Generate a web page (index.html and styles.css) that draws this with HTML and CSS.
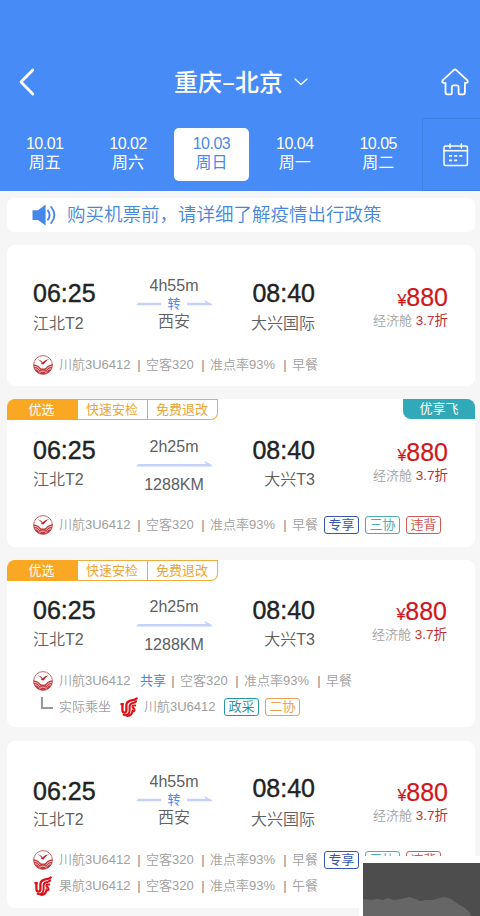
FILE: index.html
```html
<!DOCTYPE html>
<html lang="zh-CN">
<head>
<meta charset="utf-8">
<title>重庆–北京</title>
<link rel="stylesheet" href="styles.css">
</head>
<body>
<svg class="defs" width="0" height="0">
  <symbol id="sichuan" viewBox="0 0 20 20">
    <circle cx="10" cy="10" r="9.4" fill="#fff" stroke="#c0575c" stroke-width=".9"/>
    <path d="M4.2 4.2C6.5 4.6 8.4 5.6 9.8 7.5 11.2 5.7 13 4.6 16 4.2 13.5 5.6 12 7.2 10.6 9.5 9.6 9.4 9 9.1 8 8.5L8.6 7.8C7.6 6.2 6.3 5.2 4.2 4.2Z" fill="#b5232c"/>
    <path d="M.8 9.2C3.2 10 5.2 10.2 6.8 12.2 7.8 13.4 9 13.6 10 13.6 11 13.6 12.2 13.4 13.2 12.2 14.8 10.2 16.8 10 19.2 9.2 20 13.4 17 19.2 10 19.3 3 19.2 0 13.4 .8 9.2Z" fill="#c2393f"/>
    <path d="M1.2 11.4C4 11.6 5.6 12.6 7.2 15.2M2 13.8C4 13.8 5 14.6 6.2 16.6M18.8 11.4C16 11.6 14.4 12.6 12.8 15.2M18 13.8C16 13.8 15 14.6 13.8 16.6M6.4 17.8Q10 14.2 13.6 17.8" fill="none" stroke="#fff" stroke-width=".7"/>
  </symbol>
  <symbol id="airchina" viewBox="0 0 18 20">
    <g fill="none" stroke="#dc1218" stroke-linecap="round">
      <path stroke-width="2.3" d="M2.4 7.6V13C2.4 16.4 6.4 16.6 6.4 13.2V8C6.4 4.2 9.8 3.6 12.8 3.1 14.6 2.8 15.8 2.3 16.6 1.4"/>
      <path stroke-width="2" d="M1.2 7H3M3.6 17.8C7 19 9.6 17 9.6 13.6V9.2C9.6 6.6 11.6 6.3 13.6 5.9 14.8 5.6 15.6 5.2 16.1 4.4"/>
      <path stroke-width="2" d="M15.2 8.5C13.4 8.3 12.2 8.6 12.4 9.9 12.8 11.2 14.8 11.4 14.6 13.2 14.4 14.6 12.8 14.6 12.5 13.6M7.2 18.9C10.6 18.6 12.4 17 12.5 13.6"/>
    </g>
  </symbol>
  <symbol id="arrow" viewBox="0 0 76 8">
    <path d="M0 6.4 2.5 4H70L68 .8 76 5V6.4Z" fill="#c5d1fb"/>
  </symbol>
  <symbol id="arrow-split" viewBox="0 0 76 8">
    <path d="M0 5.2 2.5 2.8H25V5.2ZM51 2.8H70L68 0 76 4V5.2H51Z" fill="#c5d1fb"/>
  </symbol>
</svg>

<header class="header">
  <div class="titlebar">
    <svg class="back" viewBox="0 0 16 28"><path d="M13.8 2 2 14 13.8 26" fill="none" stroke="#fff" stroke-width="2.8" stroke-linecap="round" stroke-linejoin="round"/></svg>
    <h1 class="title">重庆–北京</h1>
    <svg class="chevron" viewBox="0 0 14 8"><path d="M1 1 7 6.5 13 1" fill="none" stroke="#fff" stroke-width="1.3" stroke-linecap="round"/></svg>
    <svg class="home" viewBox="0 0 28 28"><path d="M13 1.8Q14 1 15 1.8L26.2 12.2Q27.6 15 25 14.9H23.9V24.6Q23.9 26.3 22.2 26.3H18.6Q17.6 26.3 17.6 25.3V19.5Q17.6 17.3 15.6 17.3H12.8Q10.8 17.3 10.8 19.5V25.3Q10.8 26.3 9.8 26.3H6.2Q4.5 26.3 4.5 24.6V14.9H3Q.4 15 1.8 12.2Z" fill="none" stroke="#fff" stroke-width="1.8" stroke-linejoin="round"/></svg>
  </div>
  <nav class="dates">
    <div class="date"><span>10.01</span><span>周五</span></div>
    <div class="date"><span>10.02</span><span>周六</span></div>
    <div class="date active"><span>10.03</span><span>周日</span></div>
    <div class="date"><span>10.04</span><span>周一</span></div>
    <div class="date"><span>10.05</span><span>周二</span></div>
    <div class="calendar">
      <svg viewBox="0 0 26 24"><g fill="none" stroke="#fff" stroke-width="1.5" stroke-linecap="round"><rect x="1" y="3" width="23.4" height="19.6" rx="1.5"/><path d="M1 7.7H24.4M7 1V5M18.4 1V5"/><path stroke-linecap="butt" stroke-width="1.7" d="M11.2 12.8H14.2M16.3 12.8H19.3M6.1 12.8H9.1M6.1 17.4H9.1M11.2 17.4H14.2"/></g></svg>
    </div>
  </nav>
</header>

<div class="notice">
  <svg viewBox="0 0 26 22"><path d="M.5 6.2H6L13.6.5V21.5L6 16H.5Z" fill="#4687ea"/><path d="M16 6.6Q19.2 11 16 15.6M19.2 3Q25.6 11 19.2 19" fill="none" stroke="#4687ea" stroke-width="1.9" stroke-linecap="round"/></svg>
  <span>购买机票前，请详细了解疫情出行政策</span>
</div>

<main>
  <section class="card one">
    <div class="trip">
      <div class="end depart"><b class="time">06:25</b><span class="place">江北T2</span></div>
      <div class="via"><span>4h55m</span><div class="transfer"><svg><use href="#arrow-split"/></svg><em>转</em></div><span class="stop">西安</span></div>
      <div class="end arrive"><b class="time">08:40</b><span class="place">大兴国际</span></div>
      <div class="fare"><div class="price"><i>¥</i>880</div><div class="cabin">经济舱 <span>3.7折</span></div></div>
    </div>
    <div class="info"><svg class="logo"><use href="#sichuan"/></svg><span class="flight">川航3U6412</span><i class="bar">|</i><span class="plane">空客320</span><i class="bar">|</i><span class="rate">准点率93%</span><i class="bar">|</i><span>早餐</span></div>
  </section>

  <section class="card two">
    <div class="ribbon"><span class="pick">优选</span><span>快速安检</span><span>免费退改</span><strong>优享飞</strong></div>
    <div class="trip">
      <div class="end depart"><b class="time">06:25</b><span class="place">江北T2</span></div>
      <div class="via"><span>2h25m</span><svg><use href="#arrow"/></svg><span>1288KM</span></div>
      <div class="end arrive"><b class="time">08:40</b><span class="place">大兴T3</span></div>
      <div class="fare"><div class="price"><i>¥</i>880</div><div class="cabin">经济舱 <span>3.7折</span></div></div>
    </div>
    <div class="info"><svg class="logo"><use href="#sichuan"/></svg><span class="flight">川航3U6412</span><i class="bar">|</i><span class="plane">空客320</span><i class="bar">|</i><span class="rate">准点率93%</span><i class="bar">|</i><span>早餐</span><span class="tag blue">专享</span><span class="tag teal">三协</span><span class="tag red">违背</span></div>
  </section>

  <section class="card three">
    <div class="ribbon"><span class="pick">优选</span><span>快速安检</span><span>免费退改</span></div>
    <div class="trip">
      <div class="end depart"><b class="time">06:25</b><span class="place">江北T2</span></div>
      <div class="via"><span>2h25m</span><svg><use href="#arrow"/></svg><span>1288KM</span></div>
      <div class="end arrive"><b class="time">08:40</b><span class="place">大兴T3</span></div>
      <div class="fare"><div class="price"><i>¥</i>880</div><div class="cabin">经济舱 <span>3.7折</span></div></div>
    </div>
    <div class="info"><svg class="logo"><use href="#sichuan"/></svg><span class="flight">川航3U6412</span><span class="share">共享</span><i class="bar">|</i><span class="plane">空客320</span><i class="bar">|</i><span class="rate">准点率93%</span><i class="bar">|</i><span>早餐</span></div>
    <div class="info operated"><i class="branch"></i><span class="actual">实际乘坐</span><svg class="logo ca"><use href="#airchina"/></svg><span class="flight">川航3U6412</span><span class="tag sea">政采</span><span class="tag orange">二协</span></div>
  </section>

  <section class="card four">
    <div class="trip">
      <div class="end depart"><b class="time">06:25</b><span class="place">江北T2</span></div>
      <div class="via"><span>4h55m</span><div class="transfer"><svg><use href="#arrow-split"/></svg><em>转</em></div><span class="stop">西安</span></div>
      <div class="end arrive"><b class="time">08:40</b><span class="place">大兴国际</span></div>
      <div class="fare"><div class="price"><i>¥</i>880</div><div class="cabin">经济舱 <span>3.7折</span></div></div>
    </div>
    <div class="info"><svg class="logo"><use href="#sichuan"/></svg><span class="flight">川航3U6412</span><i class="bar">|</i><span class="plane">空客320</span><i class="bar">|</i><span class="rate">准点率93%</span><i class="bar">|</i><span>早餐</span><span class="tag blue">专享</span><span class="tag teal">三协</span><span class="tag red">违背</span></div>
    <div class="info second"><svg class="logo ca"><use href="#airchina"/></svg><span class="flight">果航3U6412</span><i class="bar">|</i><span class="plane">空客320</span><i class="bar">|</i><span class="rate">准点率93%</span><i class="bar">|</i><span>午餐</span></div>
  </section>
</main>

<div class="float">
  <svg viewBox="0 0 117 53"><rect width="117" height="53" fill="#4d4d4d"/><path d="M0 36 8 37 15 36 20 37 25 35 31 37 38 36 46 34 52 36 57 38 63 37 70 37 76 35 82 34 88 36 95 41 102 45 107 50 108 53H0Z" fill="#666"/></svg>
</div>
</body>
</html>
```
FILE: styles.css
```css
* { box-sizing: border-box; }
body {
  margin: 0;
  width: 480px;
  height: 916px;
  overflow: hidden;
  position: relative;
  background: #f6f6f6;
  font-family: "Liberation Sans", "Noto Sans CJK SC", sans-serif;
  color: #606060;
}
i, em { font-style: normal; }
svg { display: block; flex: none; }
.defs { position: absolute; }

.header {
  height: 192px;
  background: #478bf6;
  border-bottom: 1px solid #fff;
  color: #fff;
  padding-top: 50px;
}
.titlebar {
  height: 68px;
  display: flex;
  align-items: center;
  padding: 0 11px 4px 19px;
}
.back { width: 16px; height: 28px; }
.title {
  margin: 0 0 0 139px;
  width: 110px;
  padding-bottom: 2px;
  font-family: "Noto Sans CJK SC", sans-serif;
  font-size: 24px;
  font-weight: 500;
  line-height: 32px;
  white-space: nowrap;
}
.chevron { width: 14px; height: 8px; margin-left: 10px; }
.home { width: 28px; height: 28px; margin-left: auto; }

.dates { display: flex; height: 73px; padding-left: 3px; }
.date {
  width: 75px;
  height: 53px;
  margin: 10px 4.2px 0;
  padding-top: 7px;
  border-radius: 5px;
  display: flex;
  flex-direction: column;
  align-items: center;
  font-size: 16px;
  line-height: 18px;
}
.date span:first-child { letter-spacing: -.5px; }
.date span:last-child { line-height: 19px; }
.date.active { background: #fff; color: #478be9; }
.calendar {
  margin-left: auto;
  width: 58px;
  border: 1px solid #3f80e4;
  border-right: 0;
  display: flex;
  align-items: center;
  padding-left: 20px;
}
.calendar svg { width: 26px; height: 24px; }

.notice {
  margin: 6px 5px 0 7px;
  height: 34px;
  border-radius: 7px;
  background: #fff;
  display: flex;
  align-items: center;
  padding-left: 25px;
  font-size: 18.5px;
  line-height: 28px;
  color: #4687dc;
  font-weight: 350;
}
.notice svg { width: 26px; height: 22px; margin-right: 9px; }

.card {
  width: 468px;
  margin-left: 7px;
  background: #fff;
  border-radius: 8px;
}
.one { height: 141px; margin-top: 13px; }
.two { height: 148px; margin-top: 13px; }
.three { height: 167px; margin-top: 13px; }
.four { height: 167px; margin-top: 14px; }

.ribbon { display: flex; height: 21px; font-size: 13px; line-height: 19px; }
.ribbon span {
  width: 70px;
  border: 1px solid #f0ad3b;
  border-left: 0;
  color: #eda535;
  text-align: center;
  padding-right: 1px;
}
.ribbon .pick {
  width: 71px;
  background: #faa823;
  border-color: #faa823;
  border-top-left-radius: 8px;
  color: #fff;
}
.ribbon span:nth-child(3) { border-bottom-right-radius: 7px; }
.ribbon strong {
  margin-left: auto;
  width: 72px;
  height: 20px;
  border-radius: 0 8px 0 8px;
  background: #32a9b8;
  color: #fff;
  font-weight: 400;
  line-height: 20px;
  text-align: center;
}

.trip {
  display: grid;
  grid-template-columns: 103px 76px 103px 133px;
  padding-left: 26px;
  align-items: start;
}
.one .trip { height: 110px; }
.two .trip { height: 95px; }
.three .trip { height: 90px; }
.four .trip { height: 109px; }
.end { display: flex; flex-direction: column; }
.arrive { align-items: flex-end; }
.one .end { padding-top: 33px; }
.two .end { padding-top: 15px; }
.three .end { padding-top: 14px; }
.four .depart { padding-top: 35px; }
.four .arrive { padding-top: 32px; }
.time {
  font-size: 25px;
  font-weight: 400;
  line-height: 30px;
  color: #222;
  -webkit-text-stroke: .4px #222;
}
.place { margin-top: 6px; font-size: 16px; line-height: 20px; font-weight: 350; }
.two .place, .three .place { margin-top: 5px; }
.four .depart .place { margin-top: 4px; }
.four .arrive .place { margin-top: 7px; }
.via {
  display: flex;
  flex-direction: column;
  align-items: center;
  font-size: 16px;
  line-height: 20px;
}
.via svg { width: 76px; height: 8px; }
.via > svg { margin: 3px 0 7px; }
.stop { font-weight: 350; padding-top: 1px; }
.one .via { padding-top: 31px; }
.two .via { padding-top: 17px; }
.three .via { padding-top: 16px; }
.four .via { padding-top: 31px; }
.transfer { display: grid; height: 15px; align-items: center; justify-items: center; }
.transfer > * { grid-area: 1 / 1; }
.transfer em { font-size: 13px; line-height: 15px; color: #478be9; }
.fare { text-align: right; }
.one .fare { padding-top: 37px; }
.two .fare { padding-top: 17px; }
.three .fare { padding-top: 15px; padding-right: 1px; }
.four .fare { padding-top: 36px; }
.price { height: 31px; font-size: 25px; line-height: 30px; color: #d0171b; -webkit-text-stroke: .2px #d0171b; }
.price i { font-size: 16px; }
.cabin { font-size: 13px; line-height: 16px; color: #a2a2a2; font-weight: 350; }
.cabin span { color: #bd2f31; font-size: 13.5px; font-weight: 400; }

.info {
  display: flex;
  align-items: center;
  height: 20px;
  padding-left: 26px;
  font-size: 13px;
  line-height: 20px;
  font-weight: 350;
  color: #a0a0a0;
  white-space: nowrap;
}
.logo { width: 20px; height: 20px; margin-right: 6px; }
.ca { width: 18px; margin: 0 7px 0 1px; }
.flight { width: 73px; }
.plane { width: 50px; }
.rate { width: 68px; }
.bar { width: 14px; text-align: center; font-weight: 400; color: #888; }
.share { width: 34px; padding-left: 8px; color: #4687dc; font-weight: 400; }
.operated, .second { margin-top: 6px; }
.branch {
  width: 12px;
  height: 12px;
  margin: -8px 6px 0 8px;
  border: solid #999;
  border-width: 0 0 2px 2px;
}
.actual { width: 60px; }
.operated .ca { margin-right: 6px; }
.tag {
  width: 35px;
  height: 18px;
  border: 1px solid;
  border-radius: 3px;
  font-weight: 400;
  line-height: 16px;
  text-align: center;
  margin-left: 6px;
}
.blue { color: #3457ad; }
.teal { color: #4dacb8; }
.red { color: #cf5a57; }
.sea { color: #2695a5; margin-left: 7px; }
.orange { color: #e7a057; }

.float {
  position: absolute;
  left: 359px;
  top: 856px;
  width: 121px;
  height: 60px;
  padding: 7px 0 0 4px;
  background: #fff;
}
.float svg { width: 117px; height: 53px; }
```
